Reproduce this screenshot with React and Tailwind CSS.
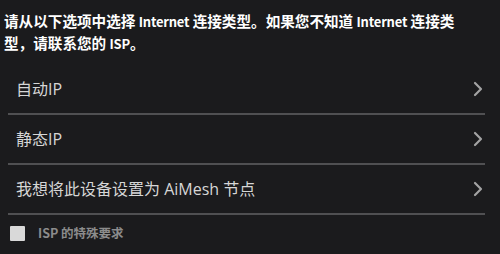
import React from "react";

const options = ["自动IP", "静态IP", "我想将此设备设置为 AiMesh 节点"];

// 标题中英文单词用窄一点的字号
const En = ({ children }) => (
	<span className="text-[13px] tracking-[-0.2px]">{children}</span>
);

const Chevron = () => (
	<svg width="10" height="16" viewBox="0 0 10 16" fill="none">
		<polyline
			points="2,2 8,8 2,14"
			stroke="#a3a3a3"
			strokeWidth="2.2"
			strokeLinecap="round"
			strokeLinejoin="round"
		/>
	</svg>
);

export default function App() {
	return (
		<div
			className="w-[500px] h-[254px] bg-[#1b1b1d] overflow-hidden"
			style={{ fontFamily: '"Open Sans", "Noto Sans CJK SC", sans-serif' }}
		>
			{/* 说明 */}
			<p
				className="pt-[10px] pl-[4px] w-[472px] text-[14.6px] leading-[21px] font-bold text-white"
				style={{ fontFamily: '"Noto Sans CJK SC", sans-serif' }}
			>
				请从以下选项中选择 <En>Internet</En> 连接类型。如果您不知道 <En>Internet</En>{" "}
				连接类型，请联系您的 <En>ISP</En>。
			</p>

			{/* 连接类型 */}
			<ul className="mt-[11px] ml-[8px] w-[477px]">
				{options.map((label) => (
					<li
						key={label}
						className="h-[50px] flex items-center justify-between pl-[8px] pr-[2px] border-b-2 border-[#505052] cursor-pointer"
					>
						<span className="text-[16px] text-[#d6d6d6]">{label}</span>
						<Chevron />
					</li>
				))}
			</ul>

			{/* ISP 特殊要求 */}
			<label className="flex items-center gap-[13px] mt-[9px] ml-[10px]">
				<span className="w-[15px] h-[15px] bg-[#d9d9d9] rounded-[1px]"></span>
				<span
					className="text-[12.5px] leading-[18px] font-bold text-[#8c8c8c]"
					style={{ fontFamily: '"Noto Sans CJK SC", sans-serif' }}
				>
					ISP 的特殊要求
				</span>
			</label>
		</div>
	);
}
